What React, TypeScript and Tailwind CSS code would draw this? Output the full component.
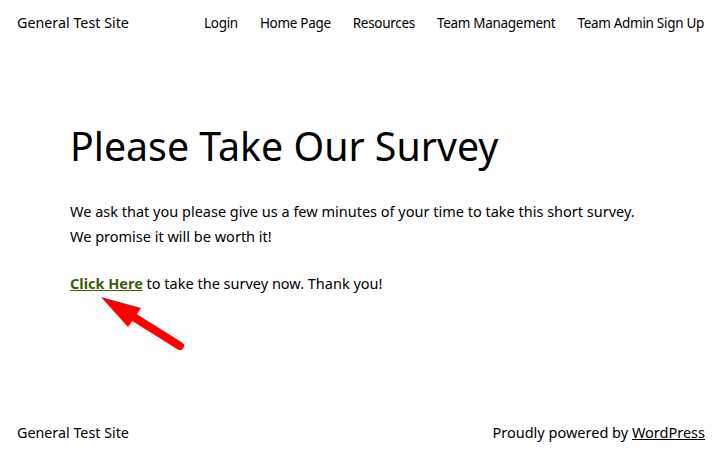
const navLinks = ["Login", "Home Page", "Resources", "Team Management", "Team Admin Sign Up"];

function Arrow() {
  return (
    <svg
      className="pointer-events-none absolute left-0 top-0"
      width="722"
      height="458"
      viewBox="0 0 722 458"
    >
      <line x1="180" y1="346" x2="124" y2="311" stroke="#ff0000" strokeWidth="8" strokeLinecap="round" />
      <polygon points="101,297 141,308 128,327" fill="#ff0000" />
    </svg>
  );
}

export default function App() {
  return (
    <div className="relative flex min-h-[458px] flex-col bg-white text-black [font-family:'Noto_Sans',sans-serif]">
      <header className="flex h-[45px] items-center justify-between pl-[17px] pr-[18px]">
        <span className="text-[14.3px]">General Test Site</span>
        <nav className="flex gap-[22px] pt-[2px] text-[13.5px] tracking-[-0.3px]">
          {navLinks.map((link) => (
            <a key={link} href="#">
              {link}
            </a>
          ))}
        </nav>
      </header>

      <main className="pl-[70px] pt-[78px]">
        <h1 className="text-[39.3px] leading-[1.2]">Please Take Our Survey</h1>
        <p className="mt-[29px] text-[14.5px] leading-[25px]">
          We ask that you please give us a few minutes of your time to take this short survey.
          <br />
          We promise it will be worth it!
        </p>
        <p className="mt-[22px] text-[14.5px] leading-[25px]">
          <a href="#" className="font-bold text-[#3a5c0b] underline">
            Click Here
          </a>{" "}
          to take the survey now. Thank you!
        </p>
      </main>

      <footer className="mt-auto flex items-center justify-between px-[17px] pb-[14px]">
        <span className="text-[14.3px]">General Test Site</span>
        <span className="text-[14.5px]">
          Proudly powered by{" "}
          <a href="#" className="underline">
            WordPress
          </a>
        </span>
      </footer>

      <Arrow />
    </div>
  );
}
